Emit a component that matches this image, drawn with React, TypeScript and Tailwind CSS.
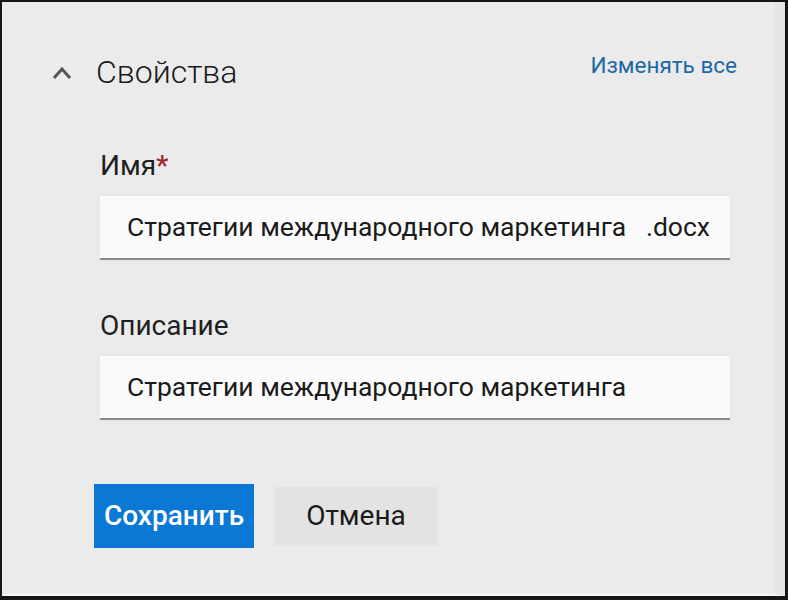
import { useState } from "react";

function Field({
  label,
  required,
  value,
  onChange,
}: {
  label: string;
  required?: boolean;
  value: string;
  onChange: (v: string) => void;
}) {
  return (
    <div className="flex flex-col">
      <label className="text-[28px] leading-[32px] text-[#1f1f1f] font-normal">
        {label}
        {required && <span className="text-[#a4262c] font-medium">*</span>}
      </label>
      <input
        value={value}
        onChange={(e) => onChange(e.target.value)}
        className="mt-[14px] h-[64px] w-[630px] bg-[#fafafa] border-b-[2px] border-[#8a8a8a] pl-[27px] pb-[2px] text-[26.5px] text-[#1b1b1b] outline-none shadow-[0_0_6px_rgba(0,0,0,0.04)]"
      />
    </div>
  );
}

export default function App() {
  const [name, setName] = useState("Стратегии международного маркетинга   .docx");
  const [desc, setDesc] = useState("Стратегии международного маркетинга");

  return (
    <div
      className="w-[788px] h-[600px] bg-[#161616] pt-[2px] pl-[2px] pr-[3px] pb-[4px]"
      style={{ fontFamily: 'Roboto, "Noto Sans", sans-serif' }}
    >
      <div className="h-full w-full bg-[#ebebeb] border-r-[10px] border-[#e4e4e4] border-b-[2px] border-b-[#f7f7f7] flex flex-col">
        {/* Header */}
        <div className="flex items-center justify-between pl-[50px] pr-[38px] pt-[50px]">
          <div className="flex items-center">
            <svg width="20" height="14" viewBox="0 0 20 14" className="mt-[2px]">
              <polyline
                points="2,12 10,3 18,12"
                fill="none"
                stroke="#555"
                strokeWidth="3"
              />
            </svg>
            <span className="ml-[24px] text-[32px] font-light text-[#1a1a1a] leading-[40px]">
              Свойства
            </span>
          </div>
          <button className="text-[22.5px] text-[#1b6aa5] leading-[30px] -mt-[14px]">
            Изменять все
          </button>
        </div>

        {/* Fields */}
        <div className="flex flex-col gap-[50px] pl-[98px] mt-[58px]">
          <Field label="Имя" required value={name} onChange={setName} />
          <Field label="Описание" value={desc} onChange={setDesc} />
        </div>

        {/* Buttons */}
        <div className="flex items-center pl-[92px] mt-[64px]">
          <button className="h-[64px] w-[160px] bg-[#0a78d4] text-white text-[28px] font-medium">
            Сохранить
          </button>
          <button className="ml-[20px] h-[59px] w-[164px] bg-[#e3e3e3] text-[#1a1a1a] text-[28px]">
            Отмена
          </button>
        </div>
      </div>
    </div>
  );
}
